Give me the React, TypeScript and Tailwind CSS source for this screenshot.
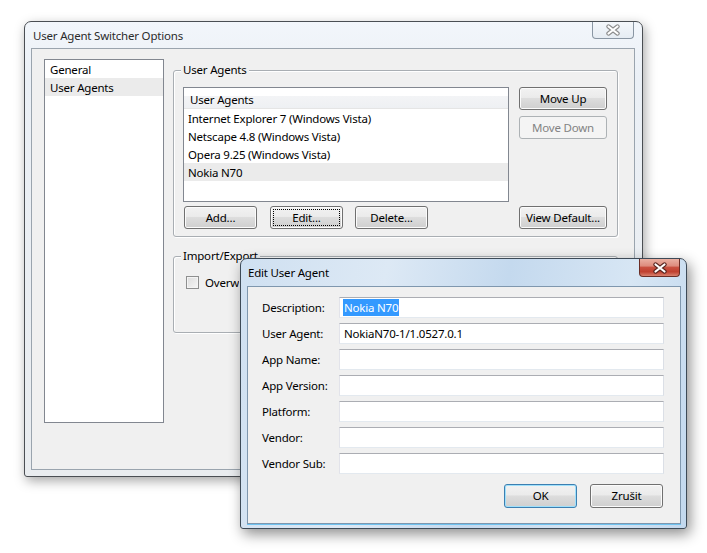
import type { ReactNode } from "react";

function CloseGlyph({ outline }: { outline: string }) {
  return (
    <svg width="16" height="12" viewBox="0 0 16 12">
      <path d="M3.5 2.5 L12.5 9.5 M12.5 2.5 L3.5 9.5" stroke={outline} strokeWidth="4.4" strokeLinecap="round" fill="none" />
      <path d="M3.5 2.5 L12.5 9.5 M12.5 2.5 L3.5 9.5" stroke="#ffffff" strokeWidth="2.2" strokeLinecap="round" fill="none" />
    </svg>
  );
}

interface BtnProps {
  children: ReactNode;
  className?: string;
  disabled?: boolean;
  focus?: boolean;
  primary?: boolean;
}

function Btn({ children, className = "", disabled, focus, primary }: BtnProps) {
  const look = disabled
    ? "border-[#adb2b5] bg-[#f4f4f4] text-[#838383]"
    : primary
    ? "border-[#3c7fb1] bg-[linear-gradient(#f2f2f2_0%,#ebebeb_45%,#dddddd_50%,#cfcfcf_100%)] shadow-[inset_0_0_0_1px_#9fe0fb] text-black"
    : "border-[#707070] bg-[linear-gradient(#f2f2f2_0%,#ebebeb_45%,#dddddd_50%,#cfcfcf_100%)] shadow-[inset_0_0_0_1px_#fbfbfb] text-black";
  return (
    <div className={`relative flex items-center justify-center rounded-[3px] border ${look} ${className}`}>
      {focus && <span className="absolute inset-[2px] border border-dotted border-black" />}
      {children}
    </div>
  );
}

function Group({ label, className = "", children }: { label: string; className?: string; children: ReactNode }) {
  return (
    <div className={`relative rounded-[3px] border border-[#a9aeb3] shadow-[1px_1px_0_#ffffff,inset_1px_1px_0_#ffffff] ${className}`}>
      <span className="absolute left-[7px] top-[-9px] h-[16px] bg-[#f0f0f0] px-[2px] leading-[16px]">{label}</span>
      {children}
    </div>
  );
}

const agents = [
  "Internet Explorer 7 (Windows Vista)",
  "Netscape 4.8 (Windows Vista)",
  "Opera 9.25 (Windows Vista)",
  "Nokia N70",
];

const fields: { label: string; value?: string; selected?: boolean }[] = [
  { label: "Description:", value: "Nokia N70", selected: true },
  { label: "User Agent:", value: "NokiaN70-1/1.0527.0.1" },
  { label: "App Name:" },
  { label: "App Version:" },
  { label: "Platform:" },
  { label: "Vendor:" },
  { label: "Vendor Sub:" },
];

function MainWindow() {
  return (
    <div className="absolute left-[24px] top-[21px] flex h-[456px] w-[619px] flex-col rounded-t-[7px] rounded-b-[3px] border border-[#4a4e53] bg-[linear-gradient(180deg,#f2f6fb_0%,#ebf0f6_12%,#e9ecef_100%)] shadow-[2px_4px_12px_rgba(0,0,0,0.35)]">
      <div className="relative flex h-[26px] items-center pl-[8px] pt-[1px] text-[#2b2b2b]">
        User Agent Switcher Options
        <div className="absolute right-[8px] top-0 flex h-[17px] w-[42px] items-center justify-center rounded-b-[4px] border border-t-0 border-[#8a96a3] bg-[linear-gradient(#f4f7fb,#e6ecf3)]">
          <CloseGlyph outline="#8c8c8c" />
        </div>
      </div>
      <div className="mb-[6px] ml-[6px] mr-[7px] flex flex-1 items-start border border-[#9aa4ae] bg-[#f0f0f0] pl-[12px] pt-[10px]">
        <div className="h-[364px] w-[120px] border border-[#828790] bg-white">
          <div className="h-[18px] pl-[5px] pt-[1px] leading-[18px]">General</div>
          <div className="h-[18px] bg-[#ebebeb] pl-[5px] pt-[1px] leading-[18px]">User Agents</div>
        </div>
        <div className="ml-[9px] mt-[11px] flex flex-col">
          <Group label="User Agents" className="h-[167px] w-[445px] pl-[9px] pt-[16px]">
            <div className="grid grid-cols-[326px_88px] gap-x-[10px]">
              <div className="h-[115px] border border-[#828790] bg-white">
                <div className="h-[21px] border-b border-[#e5e5e5] bg-[linear-gradient(#ffffff_0%,#ffffff_38%,#f3f4f6_40%,#eef0f3_100%)] pl-[6px] pt-[2px] leading-[20px]">
                  User Agents
                </div>
                {agents.map((a, i) => (
                  <div key={a} className={`h-[18px] pl-[4px] pt-[1px] leading-[18px] ${i === 3 ? "bg-[#ebebeb]" : ""}`}>
                    {a}
                  </div>
                ))}
              </div>
              <div className="flex flex-col gap-[6px]">
                <Btn className="h-[23px]">Move Up</Btn>
                <Btn className="h-[23px]" disabled>
                  Move Down
                </Btn>
              </div>
              <div className="mt-[4px] flex pl-[1px]">
                <Btn className="h-[23px] w-[73px]">Add...</Btn>
                <Btn className="ml-[13px] h-[23px] w-[73px]" focus>
                  Edit...
                </Btn>
                <Btn className="ml-[12px] h-[23px] w-[73px]">Delete...</Btn>
              </div>
              <Btn className="mt-[4px] h-[23px]">View Default...</Btn>
            </div>
          </Group>
          <Group label="Import/Export" className="mt-[19px] h-[77px] w-[445px] pl-[12px] pt-[19px]">
            <div className="flex items-center gap-[6px]">
              <span className="h-[13px] w-[13px] border border-[#8e8f8f] bg-[linear-gradient(135deg,#dcdcdc,#f6f6f6)] shadow-[inset_0_0_0_1px_#f4f4f4]" />
              <span className="w-[34px] overflow-hidden whitespace-nowrap leading-[13px]">Overwrite existing user agents</span>
            </div>
          </Group>
        </div>
      </div>
    </div>
  );
}

function EditDialog() {
  return (
    <div className="absolute left-[240px] top-[258px] flex h-[271px] w-[447px] flex-col rounded-t-[7px] rounded-b-[3px] border border-[#3d4a57] bg-[linear-gradient(100deg,#cfe0f1_0%,#dde9f5_30%,#c4d9ee_55%,#d7e6f4_80%,#c2d8ee_100%)] shadow-[3px_5px_14px_rgba(0,0,0,0.45)]">
      <div className="relative flex h-[27px] items-center pl-[7px] pt-[1px] text-black">
        Edit User Agent
        <div className="absolute right-[6px] top-0 flex h-[18px] w-[41px] items-center justify-center rounded-b-[4px] border border-t-0 border-[#6b2d25] bg-[linear-gradient(#eab0a2_0%,#de8d7e_40%,#c9503f_50%,#c0402f_75%,#d9826f_100%)]">
          <CloseGlyph outline="#5a2620" />
        </div>
      </div>
      <div className="mb-[4px] ml-[6px] mr-[5px] flex flex-1 flex-col border border-[#7f97ae] bg-[#f0f0f0] pl-[14px] pr-[15px] pt-[10px] shadow-[0_1px_0_#6fc3f0]">
        <div className="flex flex-col gap-[5px]">
          {fields.map((f) => (
            <div key={f.label} className="flex items-center">
              <span className="w-[77px] pt-[1px]">{f.label}</span>
              <div className="flex h-[21px] w-[325px] items-center border border-[#abadb3] border-b-[#e3e9ef] border-l-[#e2e3ea] border-r-[#dbdfe6] bg-white pl-[3px]">
                {f.value &&
                  (f.selected ? (
                    <span className="bg-[#3399ff] px-[1px] pt-[1px] leading-[16px] text-white">{f.value}</span>
                  ) : (
                    <span className="pl-[1px] pt-[1px]">{f.value}</span>
                  ))}
              </div>
            </div>
          ))}
        </div>
        <div className="mt-[10px] flex justify-end pr-[2px]">
          <Btn className="h-[24px] w-[73px]" primary>
            OK
          </Btn>
          <Btn className="ml-[13px] h-[24px] w-[73px]">Zrušit</Btn>
        </div>
      </div>
    </div>
  );
}

export default function App() {
  return (
    <div className="relative h-[553px] w-[707px] overflow-hidden bg-white font-['Noto_Sans',sans-serif] text-[11.5px] tracking-[-0.2px] text-black">
      <MainWindow />
      <EditDialog />
    </div>
  );
}
